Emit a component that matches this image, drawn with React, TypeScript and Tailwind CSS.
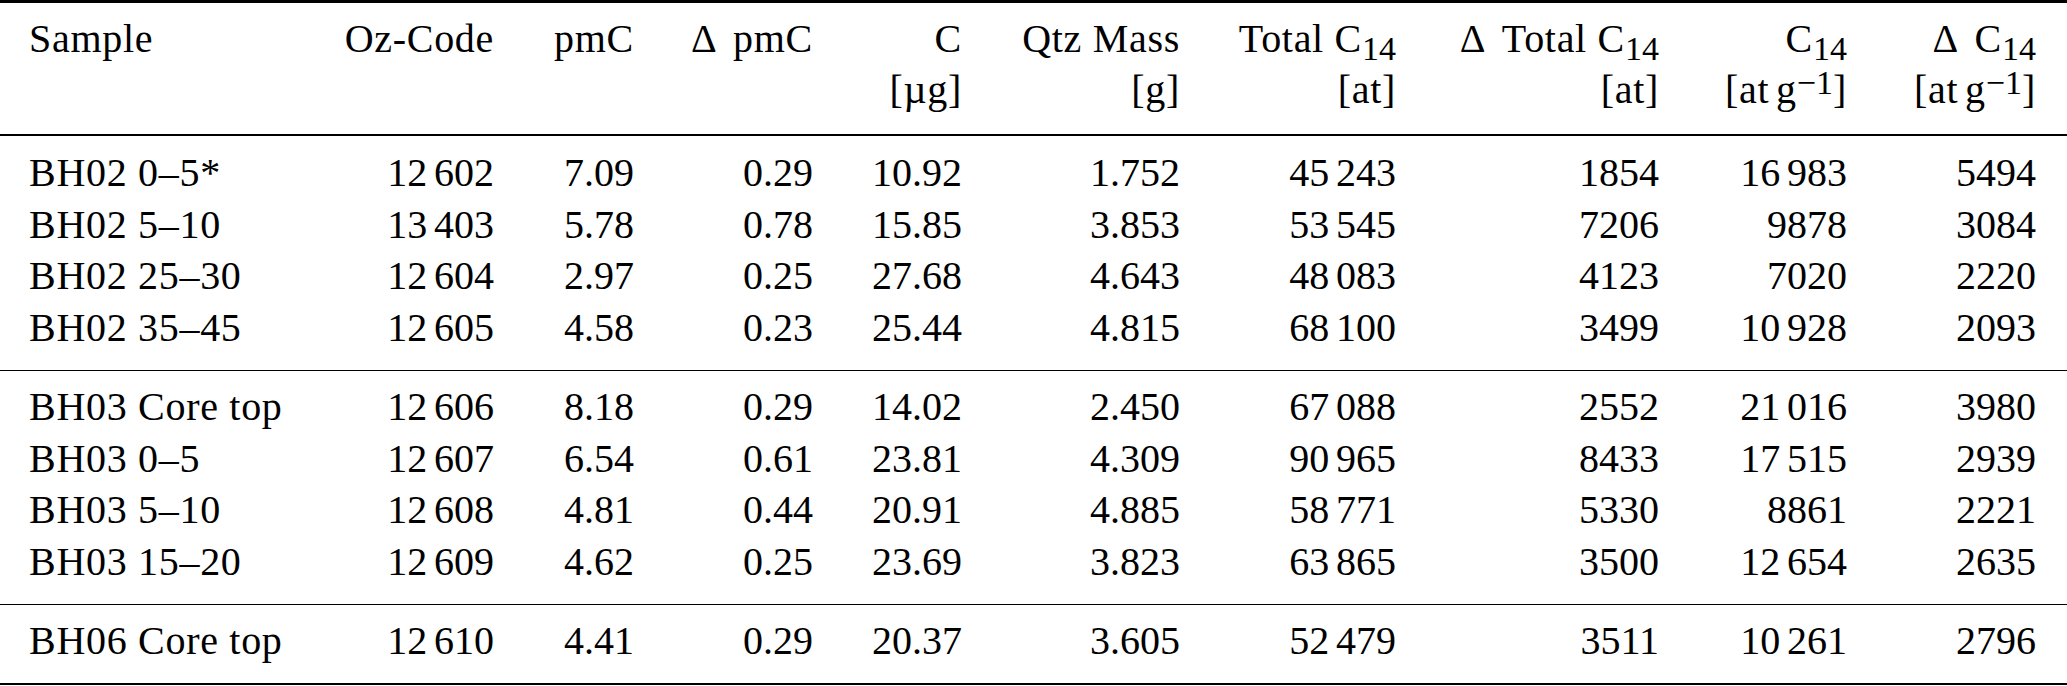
import React from "react";

const cols =
  "grid grid-cols-[280px_185px_140px_179px_149px_218px_216px_263px_188px_189px] pl-[29px]";

const T = "\u2009";

function Thin() {
  return <span className="inline-block w-[6.7px]" />;
}

function fmt(s: string): React.ReactNode {
  const parts = s.split(T);
  if (parts.length === 1) return s;
  return (
    <>
      {parts[0]}
      <Thin />
      {parts[1]}
    </>
  );
}

type Row = string[];

const groups: Row[][] = [
  [
    ["BH02 0–5*", `12${T}602`, "7.09", "0.29", "10.92", "1.752", `45${T}243`, "1854", `16${T}983`, "5494"],
    ["BH02 5–10", `13${T}403`, "5.78", "0.78", "15.85", "3.853", `53${T}545`, "7206", "9878", "3084"],
    ["BH02 25–30", `12${T}604`, "2.97", "0.25", "27.68", "4.643", `48${T}083`, "4123", "7020", "2220"],
    ["BH02 35–45", `12${T}605`, "4.58", "0.23", "25.44", "4.815", `68${T}100`, "3499", `10${T}928`, "2093"],
  ],
  [
    ["BH03 Core top", `12${T}606`, "8.18", "0.29", "14.02", "2.450", `67${T}088`, "2552", `21${T}016`, "3980"],
    ["BH03 0–5", `12${T}607`, "6.54", "0.61", "23.81", "4.309", `90${T}965`, "8433", `17${T}515`, "2939"],
    ["BH03 5–10", `12${T}608`, "4.81", "0.44", "20.91", "4.885", `58${T}771`, "5330", "8861", "2221"],
    ["BH03 15–20", `12${T}609`, "4.62", "0.25", "23.69", "3.823", `63${T}865`, "3500", `12${T}654`, "2635"],
  ],
  [
    ["BH06 Core top", `12${T}610`, "4.41", "0.29", "20.37", "3.605", `52${T}479`, "3511", `10${T}261`, "2796"],
  ],
];

function Sub({ children }: { children: React.ReactNode }) {
  return <sub className="text-[34px] tracking-normal">{children}</sub>;
}

function Delta() {
  return <span className="mr-[5px]">Δ</span>;
}

function AtPerG() {
  return (
    <span>
      [at
      <Thin />g<sup className="text-[34px] top-[-9px] tracking-normal">−1</sup>]
    </span>
  );
}

const header1: React.ReactNode[] = [
  "Sample",
  "Oz-Code",
  "pmC",
  <span key="dp">
    <Delta /> pmC
  </span>,
  "C",
  "Qtz Mass",
  <span key="t">
    Total C<Sub>14</Sub>
  </span>,
  <span key="dt">
    <Delta /> Total C<Sub>14</Sub>
  </span>,
  <span key="c">
    C<Sub>14</Sub>
  </span>,
  <span key="dc">
    <Delta /> C<Sub>14</Sub>
  </span>,
];

const header2: React.ReactNode[] = [
  "",
  "",
  "",
  "",
  "[µg]",
  "[g]",
  "[at]",
  "[at]",
  <AtPerG key="a" />,
  <AtPerG key="b" />,
];

export default function App() {
  return (
    <div className="w-[2067px] h-[686px] bg-white text-black [font-family:'Liberation_Serif','Times_New_Roman',serif] text-[40px] leading-[51.6px] overflow-hidden">
      <div className="h-[2.5px] bg-black" />
      <div className={`${cols} pt-[10.2px] pb-[18.6px] tracking-[0.7px]`}>
        {header1.map((h, i) => (
          <div key={i} className={`whitespace-nowrap ${i === 0 ? "text-left" : "text-right"}`}>
            <div className="h-[51.6px]">{h}</div>
            <div className="h-[51.6px]">{header2[i]}</div>
          </div>
        ))}
      </div>
      {groups.map((g, gi) => (
        <div key={gi}>
          <div className="h-[1.6px] bg-black" />
          <div className={`${cols} ${gi === 0 ? "pt-[11.1px]" : "pt-[10px]"} pb-[16px]`}>
            {g.map((r, ri) =>
              r.map((c, ci) => (
                <div
                  key={`${ri}-${ci}`}
                  className={`h-[51.6px] whitespace-nowrap ${
                    ci === 0 ? "text-left tracking-[0.7px]" : "text-right"
                  }`}
                >
                  {ci === 0 ? c : fmt(c)}
                </div>
              ))
            )}
          </div>
        </div>
      ))}
      <div className="h-[2.8px] bg-black" />
    </div>
  );
}
